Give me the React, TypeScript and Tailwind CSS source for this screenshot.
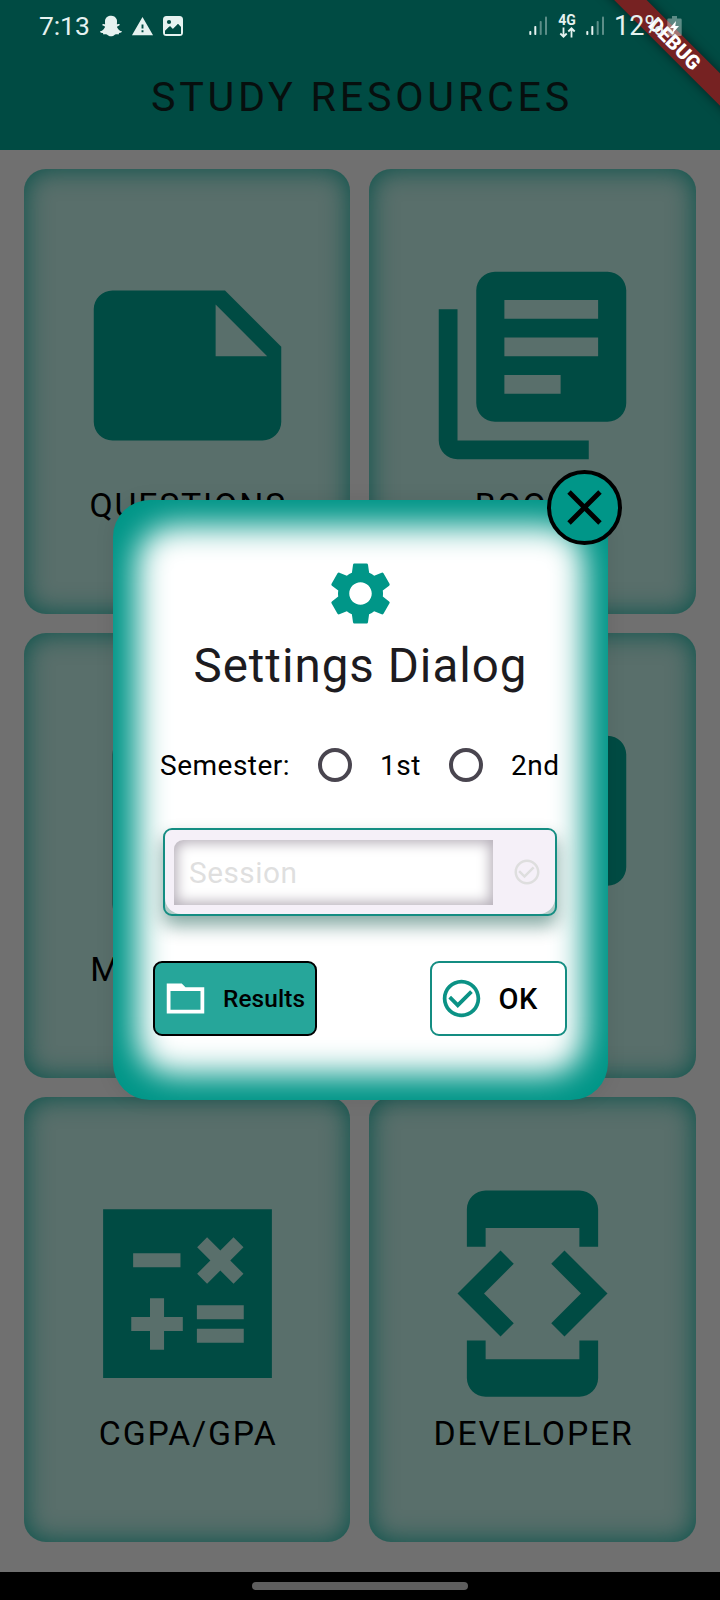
import type { ReactNode } from "react";
import {
  MdBook,
  MdCheckCircleOutline,
  MdClose,
  MdDeveloperMode,
  MdLibraryBooks,
  MdNote,
  MdSettings,
  MdVideoLibrary,
  MdWarning,
} from "react-icons/md";
import { FaSnapchatGhost } from "react-icons/fa";

function Signal() {
  return (
    <svg className="h-[20px] w-[19px]" viewBox="0 0 19 20" fill="#e6f2f0">
      <rect x="0.3" y="15" width="2" height="4" rx="0.8" />
      <rect x="5.3" y="10" width="2" height="9" rx="0.8" />
      <rect x="10.7" y="5" width="2" height="14" rx="0.8" opacity="0.4" />
      <rect x="16" y="0.5" width="2" height="18.5" rx="0.8" opacity="0.4" />
    </svg>
  );
}

function StatusBar() {
  return (
    <div className="relative z-20 flex h-[52px] items-center pl-[39px] pr-[38px] text-[#e6f2f0]">
      <span className="w-[61px] text-[26.5px] tracking-[-0.1px]">7:13</span>
      <FaSnapchatGhost className="mr-[9px] h-[22px] w-[22px]" />
      <MdWarning className="mr-[9px] h-[23px] w-[23px]" />
      <svg className="h-[20px] w-[20px]" viewBox="0 0 20 20">
        <rect x="1" y="1" width="18" height="18" rx="2.5" fill="none" stroke="#e6f2f0" strokeWidth="2" />
        <path d="M1 1h18v11l-4-4-5 5-3-3-5 5H1z" fill="#e6f2f0" />
        <circle cx="6" cy="6" r="2.1" fill="#004b43" />
        <path d="M2 15l4-4 3 3 6-6 3 3.5V18H2z" fill="#004b43" />
      </svg>
      <div className="ml-auto flex items-center">
        <Signal />
        <div className="ml-[10px] mr-[10px] flex w-[18px] flex-col items-center">
          <span className="text-[14px] font-bold leading-[11px]">4G</span>
          <svg className="mt-[1px] h-[11px] w-[17px]" viewBox="0 0 16 11" fill="none" stroke="#e6f2f0" strokeWidth="1.8">
            <path d="M4 0.5v9M0.8 6.5L4 9.7l3.2-3.2M12 10.5v-9M8.8 4.5L12 1.3l3.2 3.2" />
          </svg>
        </div>
        <Signal />
        <span className="ml-[9px] w-[53px] text-[27px]">12%</span>
        <svg className="h-[20px] w-[15px]" viewBox="0 0 15 20">
          <path d="M5 0h5v2.5h3.5a1.2 1.2 0 0 1 1.2 1.2v15a1.2 1.2 0 0 1-1.2 1.2h-12a1.2 1.2 0 0 1-1.2-1.2v-15a1.2 1.2 0 0 1 1.2-1.2H5z" fill="#e6f2f0" opacity="0.4" />
          <path d="M9 5l-6 7h3.6L5.5 17.5 12 10H8.3z" fill="#ffffff" />
        </svg>
      </div>
    </div>
  );
}

function CalculateIcon() {
  return (
    <svg className="h-[225px] w-[225px]" viewBox="0 0 24 24" fill="currentColor">
      <path
        fillRule="evenodd"
        d="M3 3h18v18H3zM6.2 7.7h5.05v1.5H6.2zM13.03 7.06L14.09 6l1.41 1.41L16.91 6l1.06 1.06-1.41 1.41 1.41 1.42-1.06 1.06-1.41-1.41-1.41 1.41-1.06-1.06 1.41-1.42zM8 12.5h1.5v2h2V16h-2v2H8v-2H6v-1.5h2zM13 13.25h5v1.5h-5zM13 15.75h5v1.5h-5z"
      />
    </svg>
  );
}

function Card({ label, children }: { label: string; children: ReactNode }) {
  return (
    <div className="flex h-[445px] flex-col items-center rounded-[22px] bg-[#596f6b] pt-[84px] text-[#004b43] shadow-[inset_0_0_26px_1px_#0b524b]">
      {children}
      <span className="mt-[8px] pl-[2px] text-[33.75px] leading-[40px] tracking-[1.85px] text-black">{label}</span>
    </div>
  );
}

function Radio({ label, width }: { label: string; width: string }) {
  return (
    <label className="flex items-center">
      <span className="h-[34px] w-[34px] rounded-full border-4 border-[#49454f]" />
      <span className={"ml-[28px] pt-[2px] text-[28px] tracking-[0.5px] text-black " + width}>{label}</span>
    </label>
  );
}

function SettingsDialog() {
  return (
    <div className="absolute left-[112.5px] top-[500px] z-10 flex h-[600px] w-[495px] flex-col rounded-[37px] bg-[#009688] shadow-[0_0_20px_rgba(0,0,0,0.08)]">
      <div className="absolute inset-0 overflow-hidden rounded-[37px]">
        <div className="absolute inset-x-[24px] inset-y-[26px] rounded-[37px] bg-white blur-[15.5px]" />
      </div>

      <MdSettings className="relative mt-[56px] h-[75px] w-[75px] self-center text-[#009688]" />
      <h2 className="relative mt-[7px] self-center pl-[1px] text-[47.5px] leading-[56px] tracking-[1px] text-[#1d1b20]">Settings Dialog</h2>

      <div className="relative mt-[49px] flex h-[44px] items-center pl-[47.5px]">
        <span className="w-[158px] pt-[2px] text-[28px] tracking-[0.5px] text-black">Semester:</span>
        <Radio label="1st" width="w-[69px]" />
        <Radio label="2nd" width="w-[60px]" />
      </div>

      <div className="relative ml-[50.5px] mt-[41px] h-[88px] w-[394px] rounded-[9px] border-2 border-[#148d82] bg-[#b3ccc8] shadow-[0_10px_18px_rgba(0,77,64,0.48)]">
        <div className="flex h-full rounded-b-[16px] rounded-t-[7px] bg-[#f5f0f8] pl-[9px] pt-[10px]">
          <div className="flex h-[65px] w-[319px] items-center rounded-tl-[9px] bg-white pl-[15px] pt-[1px] text-[29.8px] tracking-[0.5px] text-[#dfdfdf] shadow-[inset_0_0_13px_3px_#b5aeb8]">
            Session
          </div>
          <MdCheckCircleOutline className="ml-[19px] mt-[17px] h-[30px] w-[30px] text-[#dedede]" />
        </div>
      </div>

      <div className="relative ml-[40.5px] mr-[41px] mt-[45px] flex justify-between">
        <button className="flex h-[75px] w-[163.5px] items-center rounded-[9px] border-2 border-black bg-[#26a69a] pl-[8px]">
          <svg className="h-[45px] w-[45px]" viewBox="0 0 24 24" fill="white">
            <path fillRule="evenodd" d="M2 4h8l2 2h10v14H2zM4 8v10h16V8z" />
          </svg>
          <span className="ml-[15px] pt-px text-[24.4px] font-medium tracking-[0.1px] text-black">Results</span>
        </button>
        <button className="flex h-[75px] w-[137px] items-center rounded-[9px] border-2 border-[#148d82] bg-white pl-[7px]">
          <MdCheckCircleOutline className="h-[45px] w-[45px] text-[#0b9285]" />
          <span className="ml-[15px] pt-[2px] text-[29px] font-medium tracking-[0.6px] text-black">OK</span>
        </button>
      </div>

      <button className="absolute left-[434.5px] top-[-30px] flex h-[75px] w-[75px] items-center justify-center rounded-full border-4 border-black bg-[#009688]">
        <MdClose className="h-[59px] w-[59px] shrink-0 text-black" />
      </button>
    </div>
  );
}

export default function App() {
  return (
    <div className="relative flex h-[1600px] w-[720px] flex-col overflow-hidden bg-[#707070] font-['Roboto',sans-serif]">
      <header className="h-[150px] shrink-0 bg-[#004b43]">
        <StatusBar />
        <h1 className="mt-[20px] pl-[4px] text-center text-[41.25px] leading-[50px] tracking-[3.75px] text-[#070f0e]">STUDY RESOURCES</h1>
      </header>
      <div className="absolute right-[-70px] top-[33px] flex h-[22.5px] w-[230px] rotate-45 items-center justify-center bg-[#762222] pr-[1px] text-[20px] font-black text-white shadow-[0_0_11px_rgba(0,0,0,0.5)]">
        <span>DEBUG</span>
      </div>

      <main className="grid flex-1 grid-cols-2 content-start gap-x-[19px] gap-y-[19px] pl-[24px] pr-[24.2px] pt-[19px]">
        <Card label="QUESTIONS"><MdNote className="h-[225px] w-[225px]" /></Card>
        <Card label="BOOKS"><MdLibraryBooks className="h-[225px] w-[225px]" /></Card>
        <Card label="MATERIALS"><MdBook className="h-[225px] w-[225px]" /></Card>
        <Card label="VIDEOS"><MdVideoLibrary className="h-[225px] w-[225px]" /></Card>
        <Card label="CGPA/GPA"><CalculateIcon /></Card>
        <Card label="DEVELOPER"><MdDeveloperMode className="h-[225px] w-[225px]" /></Card>
      </main>

      <footer className="flex h-[28px] shrink-0 justify-center bg-black pt-[10px]">
        <div className="h-[8px] w-[216px] rounded-full bg-[#5e5e5e]" />
      </footer>
      <SettingsDialog />
    </div>
  );
}
